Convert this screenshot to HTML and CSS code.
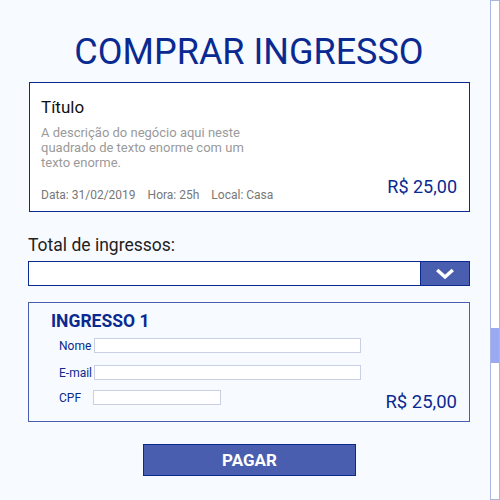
FILE: index.html
```html
<!DOCTYPE html>
<html lang="pt">
<head>
<meta charset="utf-8">
<link rel="stylesheet" href="styles.css">
</head>
<body>
<div class="page">
  <main class="main">
    <h1 class="title">COMPRAR INGRESSO</h1>
    <section class="event">
      <div class="event-info">
        <h2 class="event-title">Título</h2>
        <p class="event-desc">A descrição do negócio aqui neste quadrado de texto enorme com um texto enorme.</p>
        <div class="event-meta"><span>Data: 31/02/2019</span><span>Hora: 25h</span><span>Local: Casa</span></div>
      </div>
      <div class="price">R$ 25,00</div>
    </section>
    <label class="total-label">Total de ingressos:</label>
    <div class="select">
      <div class="select-value"></div>
      <div class="select-btn">
        <svg width="20" height="12" viewBox="0 0 20 12"><path d="M2.2 2 L10 9 L17.8 2" fill="none" stroke="#fff" stroke-width="3.4" stroke-linecap="butt"/></svg>
      </div>
    </div>
    <section class="ticket">
      <h3 class="ticket-title">INGRESSO 1</h3>
      <div class="ticket-body">
        <div class="fields">
          <div class="field"><span class="field-label">Nome</span><span class="input wide"></span></div>
          <div class="field"><span class="field-label">E-mail</span><span class="input wide"></span></div>
          <div class="field"><span class="field-label">CPF</span><span class="input short"></span></div>
        </div>
        <div class="price price-lg">R$ 25,00</div>
      </div>
    </section>
    <div class="pay-row"><button class="pay">PAGAR</button></div>
  </main>
  <div class="scrollbar"><div class="thumb"></div></div>
</div>
</body>
</html>
```
FILE: styles.css
```css
*, *::before, *::after { box-sizing: border-box; }
html, body { margin: 0; padding: 0; }
body {
  background: #f7fbff;
  font-family: Roboto, "Liberation Sans", sans-serif;
  width: 500px;
  height: 500px;
  overflow: hidden;
}
.page { display: flex; height: 500px; }
.main {
  width: 442px;
  margin-left: 28px;
  margin-right: 20px;
  display: flex;
  flex-direction: column;
}
.title {
  margin: 29px 0 0;
  font-weight: 400;
  font-size: 36px;
  line-height: 46px;
  color: #0a2a92;
  text-align: center;
}
.event {
  margin-top: 7px;
  height: 130px;
  margin-left: 1px;
  border: 1px solid #0a2a92;
  background: #fff;
  display: flex;
  justify-content: space-between;
  align-items: flex-end;
  padding: 0 12px 9px 11px;
}
.event-info { display: flex; flex-direction: column; align-self: stretch; }
.event-title {
  margin: 13px 0 0;
  font-weight: 400;
  font-size: 17px;
  line-height: 22px;
  color: #111;
}
.event-desc {
  margin: 7px 0 0;
  width: 225px;
  font-size: 13px;
  line-height: 15px;
  color: #9a9a9a;
}
.event-meta {
  margin-top: auto;
  font-size: 12px;
  line-height: 14px;
  color: #777;
  display: flex;
  gap: 12px;
}
.price {
  font-size: 18px;
  line-height: 20px;
  color: #0a2a92;
  margin-bottom: 5px;
}
.total-label {
  margin: 23px 0 0 0;
  font-size: 17.5px;
  line-height: 20px;
  color: #222;
}
.select {
  margin-top: 6px;
  height: 25px;
  border: 1px solid #0a2a92;
  display: flex;
  background: #fff;
}
.select-value { flex: 1; }
.select-btn {
  width: 49px;
  background: #4a5eb0;
  border-left: 1px solid #0a2a92;
  display: flex;
  align-items: center;
  justify-content: center;
}
.ticket {
  margin-top: 16px;
  height: 120px;
  border: 1px solid #4a5eb0;
  padding: 0 12px 0 22px;
  display: flex;
  flex-direction: column;
}
.ticket-title {
  margin: 8px 0 0;
  font-size: 17.5px;
  line-height: 20px;
  font-weight: 700;
  color: #0a2a92;
}
.ticket-body { display: flex; justify-content: space-between; align-items: flex-end; margin-top: 7px; }
.fields { display: flex; flex-direction: column; gap: 12px; padding-left: 8px; }
.field { display: flex; align-items: center; height: 15px; }
.field-label {
  width: 35px;
  font-size: 12px;
  color: #0a2a92;
}
.input {
  height: 15px;
  border: 1px solid #c9d0e6;
  background: #fff;
}
.wide { width: 267px; }
.short { width: 128px; margin-left: -1px; }
.field:nth-child(3) { margin-top: -2px; }
.price-lg { font-size: 18.5px; margin-bottom: -7px; }
.pay-row { display: flex; justify-content: center; margin-top: 22px; }
.pay {
  width: 213px;
  height: 32px;
  background: #4a5eb0;
  border: 1px solid #0a2a92;
  color: #fff;
  font-family: Roboto, "Liberation Sans", sans-serif;
  font-weight: 700;
  font-size: 17px;
  padding: 0;
  margin-left: 1px;
}
.scrollbar {
  width: 10px;
  height: 500px;
  border: 1px solid #a9b5e3;
  background: #fff;
  display: flex;
  flex-direction: column;
}
.thumb {
  margin-top: 327px;
  height: 35px;
  background: #9aaaf2;
}
```
